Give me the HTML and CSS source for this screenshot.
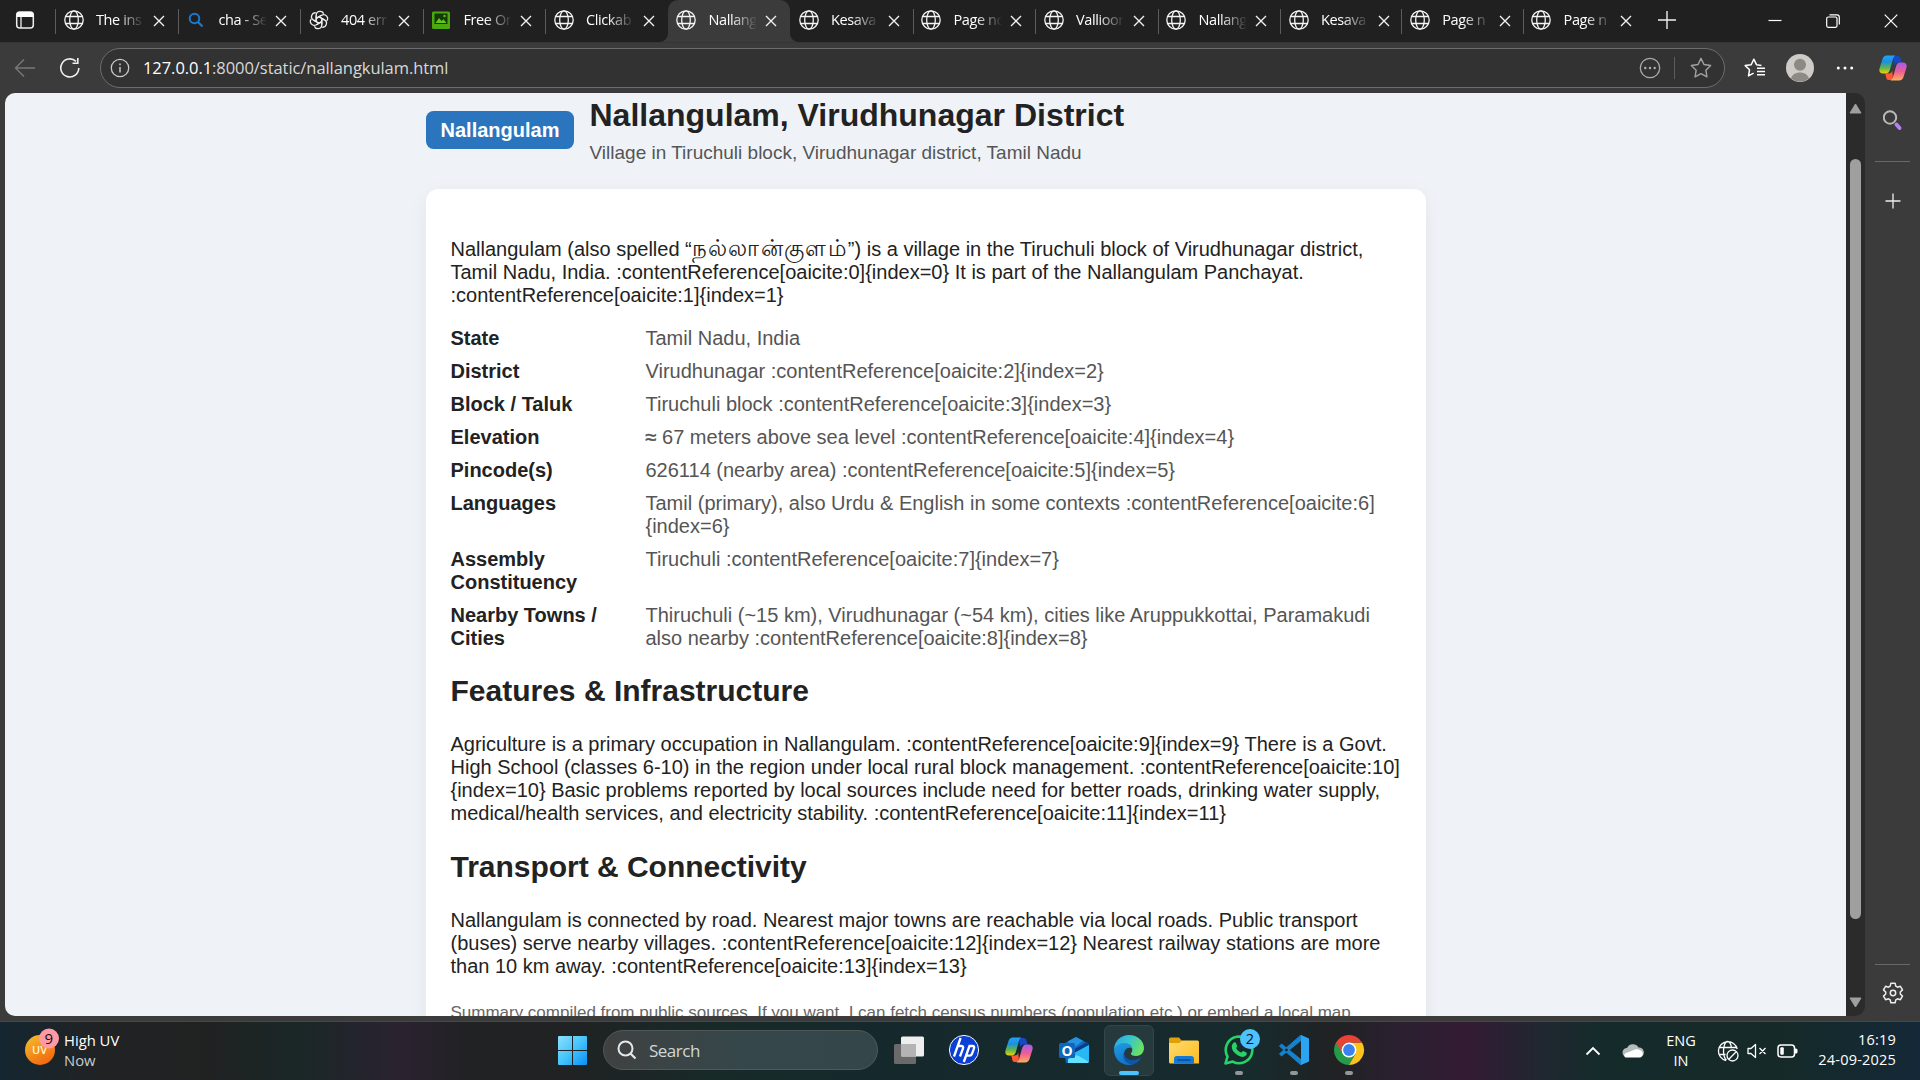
FILE: index.html
```html
<!DOCTYPE html>
<html lang="en">
<head>
<meta charset="utf-8">
<title>Nallangulam, Virudhunagar District</title>
<link rel="stylesheet" href="styles.css">
</head>
<body>
<svg class="defs" width="0" height="0" aria-hidden="true">
  <defs>
    <linearGradient id="cpA" x1="0" y1="0" x2="0" y2="1"><stop offset="0" stop-color="#1fa5f5"/><stop offset=".35" stop-color="#1c8fe0"/><stop offset=".7" stop-color="#62b846"/><stop offset="1" stop-color="#f5cf0a"/></linearGradient>
    <linearGradient id="cpB" x1="0" y1="0" x2="0" y2="1"><stop offset="0" stop-color="#a35cf0"/><stop offset=".5" stop-color="#ee5d95"/><stop offset="1" stop-color="#ffae5c"/></linearGradient>
    <linearGradient id="win" x1="0" y1="0" x2="1" y2="1"><stop offset="0" stop-color="#8be0ff"/><stop offset=".5" stop-color="#45c4fb"/><stop offset="1" stop-color="#0a8ff5"/></linearGradient>
    <linearGradient id="uv" x1="0" y1="0" x2=".6" y2="1"><stop offset="0" stop-color="#f2c12e"/><stop offset="1" stop-color="#f36a10"/></linearGradient>
    <linearGradient id="edA" x1="0" y1="0" x2="1" y2=".4"><stop offset="0" stop-color="#2ba3e4"/><stop offset=".5" stop-color="#35c4d0"/><stop offset="1" stop-color="#67e067"/></linearGradient>
    <linearGradient id="edB" x1="0" y1="0" x2=".3" y2="1"><stop offset="0" stop-color="#1f9de0"/><stop offset="1" stop-color="#1373cc"/></linearGradient>
    <linearGradient id="fold" x1="0" y1="0" x2="1" y2="1"><stop offset="0" stop-color="#ffdc6b"/><stop offset="1" stop-color="#fcba22"/></linearGradient>
    <symbol id="globe" viewBox="0 0 20 20"><g fill="none" stroke="#f4f4f4" stroke-width="1.3"><circle cx="10" cy="10" r="9.2"/><ellipse cx="10" cy="10" rx="4.3" ry="9.2"/><path d="M2 6.5h16M2 13.5h16"/></g></symbol>
    <symbol id="x" viewBox="0 0 12 12"><path d="M1 1l10 10M11 1L1 11" stroke="#f0f0f0" stroke-width="1.4" fill="none"/></symbol>
    <symbol id="star" viewBox="0 0 20 20"><path d="M10 1.2l2.7 5.6 6.1.9-4.4 4.3 1 6.1-5.4-2.9-5.4 2.9 1-6.1L1.200 7.700l6.100-.9z" fill="none" stroke-width="1.3" stroke-linejoin="round"/></symbol>
    <symbol id="copilot" viewBox="0 0 28 28"><path d="M14 2h4.500c1.700 0 2.600 1.200 3.100 3l1 3.500h-4c-2 0-3 1-3.600 3z" fill="#1748c8"/><path d="M14 26H9.500c-1.700 0-2-1.300-2.400-3L6.200 19.500h3.500c2 0 3-1 3.600-3z" fill="#ff5a34"/><path d="M8 1.500h8.500c-1.500.6-2.100 2-2.600 3.700L11 15.500c-.8 2.700-2 4-4.300 4H4c-3 0-4.200-2-3.500-5L3.500 5C4.200 2.700 5.600 1.500 8 1.500z" fill="url(#cpA)"/><path d="M20 26.500h-8.500c1.500-.6 2.100-2 2.600-3.700L17 12.500c.8-2.700 2-4 4.300-4H24c3 0 4.200 2 3.500 5L24.500 23c-.7 2.300-2.100 3.500-4.500 3.500z" fill="url(#cpB)"/></symbol>
  </defs>
</svg>

<header class="tabstrip">
  <div class="tabmenu"><svg width="20" height="20" viewBox="0 0 20 20"><rect x="1.700" y="2" width="16.600" height="16" rx="3" fill="none" stroke="#eee" stroke-width="1.500"/><path d="M1.700 7V4.500A2.500 2.500 0 0 1 4.200 2h11.600a2.500 2.500 0 0 1 2.500 2.500V7z" fill="#fff"/><path d="M6 7v11" stroke="#eee" stroke-width="1.300"/></svg></div>
  <div class="tabs">
    <div class="tab"><svg class="fav"><use href="#globe"/></svg><span>The ins</span><svg class="close"><use href="#x"/></svg></div>
    <div class="tab"><svg class="fav" viewBox="0 0 20 20"><circle cx="8.500" cy="8.500" r="4.800" fill="none" stroke="#1a7ad0" stroke-width="2"/><path d="M12 12l4.500 4.500" stroke="#1a7ad0" stroke-width="2.200"/></svg><span>cha - Se</span><svg class="close"><use href="#x"/></svg></div>
    <div class="tab"><svg class="fav" viewBox="0 0 20 20"><g fill="none" stroke="#eee" stroke-width="1.300" stroke-linejoin="round"><path id="petal" d="M7.200 11.700V5.300C7.200.6 13.400.2 14.600 3.700M7.200 8.400l5.300-3.100"/><use href="#petal" transform="rotate(60 10 10)"/><use href="#petal" transform="rotate(120 10 10)"/><use href="#petal" transform="rotate(180 10 10)"/><use href="#petal" transform="rotate(240 10 10)"/><use href="#petal" transform="rotate(300 10 10)"/></g></svg><span>404 err</span><svg class="close"><use href="#x"/></svg></div>
    <div class="tab"><svg class="fav" viewBox="0 0 20 20"><rect x="1" y="1.500" width="18" height="17.500" rx="1.500" fill="#4ba90d"/><path d="M3.500 3.500h13v10.500h-13z" fill="#173807"/><path d="M4.500 13l3.500-5 2.500 3 2-1.800 3 3.800z" fill="#62c41c"/><circle cx="13.500" cy="6" r="1.200" fill="#62c41c"/></svg><span>Free On</span><svg class="close"><use href="#x"/></svg></div>
    <div class="tab"><svg class="fav"><use href="#globe"/></svg><span>Clickab</span><svg class="close"><use href="#x"/></svg></div>
    <div class="tab active"><svg class="fav"><use href="#globe"/></svg><span>Nallang</span><svg class="close"><use href="#x"/></svg></div>
    <div class="tab first"><svg class="fav"><use href="#globe"/></svg><span>Kesava</span><svg class="close"><use href="#x"/></svg></div>
    <div class="tab"><svg class="fav"><use href="#globe"/></svg><span>Page no</span><svg class="close"><use href="#x"/></svg></div>
    <div class="tab"><svg class="fav"><use href="#globe"/></svg><span>Vallioor</span><svg class="close"><use href="#x"/></svg></div>
    <div class="tab"><svg class="fav"><use href="#globe"/></svg><span>Nallang</span><svg class="close"><use href="#x"/></svg></div>
    <div class="tab narrow"><svg class="fav"><use href="#globe"/></svg><span>Kesava</span><svg class="close"><use href="#x"/></svg></div>
    <div class="tab narrow"><svg class="fav"><use href="#globe"/></svg><span>Page n</span><svg class="close"><use href="#x"/></svg></div>
    <div class="tab narrow"><svg class="fav"><use href="#globe"/></svg><span>Page n</span><svg class="close"><use href="#x"/></svg></div>
  </div>
  <div class="newtab"><svg width="18" height="18" viewBox="0 0 18 18"><path d="M9 0v18M0 9h18" stroke="#eee" stroke-width="1.400"/></svg></div>
  <div class="wincontrols">
    <div><svg width="14" height="14" viewBox="0 0 14 14"><path d="M.5 6.500h13" stroke="#fff" stroke-width="1.200"/></svg></div>
    <div><svg width="14" height="14" viewBox="0 0 14 14"><rect x=".7" y="3" width="10.300" height="10.300" rx="1.500" fill="none" stroke="#fff" stroke-width="1.200"/><path d="M3.500.8h7.500a2.300 2.300 0 0 1 2.300 2.300v7.500" fill="none" stroke="#fff" stroke-width="1.200"/></svg></div>
    <div><svg width="14" height="14" viewBox="0 0 14 14"><path d="M.7.7l12.600 12.600M13.300.7L.7 13.300" stroke="#fff" stroke-width="1.200"/></svg></div>
  </div>
</header>

<div class="toolbar">
  <div class="tool nav"><svg width="22" height="20" viewBox="0 0 22 20"><path d="M10 1.500L1.500 10l8.500 8.500M1.500 10H21" fill="none" stroke="#787878" stroke-width="1.400"/></svg></div>
  <div class="tool nav"><svg width="22" height="22" viewBox="0 0 22 22"><path d="M19.800 11A9 9 0 1 1 17 4.400M18.800 1v5.300h-5.300" fill="none" stroke="#f0f0f0" stroke-width="1.600"/></svg></div>
  <div class="urlbar">
    <svg width="20" height="20" viewBox="0 0 20 20"><circle cx="10" cy="10" r="8.700" fill="none" stroke="#c8c8c8" stroke-width="1.300"/><path d="M10 9v5.500M10 5.500v1.700" stroke="#c8c8c8" stroke-width="1.500"/></svg>
    <span class="url"><b>127.0.0.1</b>:8000/static/nallangkulam.html</span>
    <svg width="22" height="22" viewBox="0 0 22 22"><circle cx="11" cy="11" r="9.700" fill="none" stroke="#aaa" stroke-width="1.300"/><g fill="#b0b0b0"><circle cx="6.300" cy="11" r="1.200"/><circle cx="11" cy="11" r="1.200"/><circle cx="15.700" cy="11" r="1.200"/></g></svg>
    <i class="sep"></i>
    <svg width="22" height="22" stroke="#a0a0a0"><use href="#star"/></svg>
  </div>
  <div class="tool fav-tool"><svg width="22" height="20" viewBox="0 0 22 20"><path d="M17.500 7.400l-5-.7L9.800 1.200 7.200 6.700l-6 .9 4.300 4.200-1 6.100 5.100-2.700" fill="none" stroke="#fff" stroke-width="1.500" stroke-linejoin="round"/><path d="M13 10.200h8M13 13.500h8M13 16.800h8" stroke="#fff" stroke-width="1.500"/></svg></div>
  <div class="tool avatar"><svg width="28" height="28" viewBox="0 0 28 28"><circle cx="14" cy="14" r="14" fill="#cfccc8"/><circle cx="14" cy="10.700" r="6" fill="#8d8985"/><path d="M5 24.500c1-4 5-6 9-6s8 2 9 6A14 14 0 0 1 14 27.500 14 14 0 0 1 5 24.500z" fill="#8d8985"/></svg></div>
  <div class="tool more"><svg width="18" height="6" viewBox="0 0 18 6"><g fill="#fff"><circle cx="2.300" cy="3" r="1.500"/><circle cx="9" cy="3" r="1.500"/><circle cx="15.700" cy="3" r="1.500"/></g></svg></div>
  <div class="tool cop"><svg width="28" height="28"><use href="#copilot"/></svg></div>
</div>

<div class="window">
  <main class="viewport">
    <div class="page">
      <div class="head">
        <div class="badge">Nallangulam</div>
        <div>
          <h1>Nallangulam, Virudhunagar District</h1>
          <div class="subtitle">Village in Tiruchuli block, Virudhunagar district, Tamil Nadu</div>
        </div>
      </div>
      <article class="card">
        <p class="intro">Nallangulam (also spelled “<span class="tamil" lang="ta">நல்லான்குளம்</span>”) is a village in the Tiruchuli block of Virudhunagar district, Tamil Nadu, India. :contentReference[oaicite:0]{index=0} It is part of the Nallangulam Panchayat. :contentReference[oaicite:1]{index=1}</p>
        <dl>
          <dt>State</dt><dd>Tamil Nadu, India</dd>
          <dt>District</dt><dd>Virudhunagar :contentReference[oaicite:2]{index=2}</dd>
          <dt>Block / Taluk</dt><dd>Tiruchuli block :contentReference[oaicite:3]{index=3}</dd>
          <dt>Elevation</dt><dd><span class="approx">≈</span> 67 meters above sea level :contentReference[oaicite:4]{index=4}</dd>
          <dt>Pincode(s)</dt><dd>626114 (nearby area) :contentReference[oaicite:5]{index=5}</dd>
          <dt>Languages</dt><dd>Tamil (primary), also Urdu &amp; English in some contexts :contentReference[oaicite:6]{index=6}</dd>
          <dt>Assembly Constituency</dt><dd>Tiruchuli :contentReference[oaicite:7]{index=7}</dd>
          <dt>Nearby Towns / Cities</dt><dd>Thiruchuli (~15 km), Virudhunagar (~54 km), cities like Aruppukkottai, Paramakudi also nearby :contentReference[oaicite:8]{index=8}</dd>
        </dl>
        <h2>Features &amp; Infrastructure</h2>
        <p>Agriculture is a primary occupation in Nallangulam. :contentReference[oaicite:9]{index=9} There is a Govt. High School (classes 6-10) in the region under local rural block management. :contentReference[oaicite:10]{index=10} Basic problems reported by local sources include need for better roads, drinking water supply, medical/health services, and electricity stability. :contentReference[oaicite:11]{index=11}</p>
        <h2 class="second">Transport &amp; Connectivity</h2>
        <p>Nallangulam is connected by road. Nearest major towns are reachable via local roads. Public transport (buses) serve nearby villages. :contentReference[oaicite:12]{index=12} Nearest railway stations are more than 10 km away. :contentReference[oaicite:13]{index=13}</p>
        <p class="note">Summary compiled from public sources. If you want, I can fetch census numbers (population etc.) or embed a local map.</p>
      </article>
    </div>
  </main>
  <div class="scrollbar">
    <svg width="13" height="11" viewBox="0 0 13 11"><path d="M6.500 1L12 10H1z" fill="#9f9f9f" stroke="#9f9f9f" stroke-linejoin="round"/></svg>
    <div class="thumb"></div>
    <svg width="13" height="11" viewBox="0 0 13 11"><path d="M6.500 10L12 1H1z" fill="#9f9f9f" stroke="#9f9f9f" stroke-linejoin="round"/></svg>
  </div>
  <aside class="sidebar">
    <svg width="20" height="20" viewBox="0 0 20 20"><circle cx="7" cy="7.500" r="6.200" fill="none" stroke="#b9b9b9" stroke-width="2"/><path d="M13.500 14.500l3 3.500" stroke="#b583ee" stroke-width="3.800" stroke-linecap="round"/></svg>
    <hr>
    <svg width="16" height="16" viewBox="0 0 16 16"><path d="M8 .5v15M.5 8h15" stroke="#eee" stroke-width="1.300"/></svg>
    <div class="grow"></div>
    <hr>
    <svg class="gear" width="22" height="22" viewBox="0 0 22 22"><path d="M8.900 1.200h4.200l.7 3 1.700 1 2.900-.9 2.100 3.600-2.200 2.100v2l2.200 2.100-2.100 3.600-2.900-.9-1.700 1-.7 3H8.900l-.7-3-1.700-1-2.900.9-2.100-3.600L3.700 12v-2L1.500 7.900l2.100-3.600 2.900.9 1.700-1z" fill="none" stroke="#eee" stroke-width="1.500" stroke-linejoin="round"/><circle cx="11" cy="11" r="2.700" fill="none" stroke="#eee" stroke-width="1.500"/></svg>
  </aside>
</div>

<footer class="taskbar">
  <div class="widget">
    <svg width="42" height="38" viewBox="0 0 42 38"><circle cx="15" cy="22" r="15" fill="url(#uv)"/><text x="14.500" y="26" text-anchor="middle" class="uvt">UV</text><circle cx="24" cy="10.500" r="10" fill="#ff99a4"/><text x="23.700" y="16" text-anchor="middle" class="count">9</text></svg>
    <div class="wtext"><span>High UV</span><span class="dim">Now</span></div>
  </div>
  <div class="start"><svg width="29" height="29" viewBox="0 0 29 29"><path d="M0 1a1 1 0 0 1 1-1h13v14H0zM15 0h13a1 1 0 0 1 1 1v13H15zM0 15h14v14H1a1 1 0 0 1-1-1zM15 15h14v13a1 1 0 0 1-1 1H15z" fill="url(#win)"/></svg></div>
  <div class="search"><svg width="20" height="20" viewBox="0 0 20 20"><circle cx="8.500" cy="8.500" r="7" fill="none" stroke="#e4e8e8" stroke-width="2"/><path d="M13.500 13.500l5 5" stroke="#e4e8e8" stroke-width="2.200"/></svg><span>Search</span></div>
  <div class="apps">
    <div class="app"><svg width="32" height="32" viewBox="0 0 32 32"><rect x="1" y="10" width="22" height="20" rx="1.500" fill="#6a6a6a"/><rect x="8" y="2.500" width="23" height="20" rx="1.500" fill="#eee"/><path d="M8 10h15v12.500H9.500A1.500 1.500 0 0 1 8 21z" fill="#b4b4b4"/></svg></div>
    <div class="app"><svg width="32" height="32" viewBox="0 0 32 32"><circle cx="16" cy="16" r="14.600" fill="#0a3fd6" stroke="#f4f6ff" stroke-width="1"/><g fill="none" stroke="#fff" stroke-width="2.300"><path d="M12.600 4L6 22.500M10 12h3.200c1.800 0 2.300 1 1.800 2.400L12 22.500M15.800 28L21.500 12h3c1.600 0 2 1 1.500 2.300l-2 5.500c-.5 1.400-1.300 1.800-2.600 1.800h-3"/></g></svg></div>
    <div class="app"><svg width="28" height="28"><use href="#copilot"/></svg></div>
    <div class="app"><svg width="32" height="32" viewBox="0 0 32 32"><path d="M5 10L18 3l13 7v17a2 2 0 0 1-2 2H8z" fill="#1267c2"/><path d="M10 7.300L18 3l7 3.700L13 16z" fill="#2592e2"/><path d="M15 16L30 7.500l1 3.500-14 8z" fill="#0a3d86"/><path d="M16 19l15-8v16a2 2 0 0 1-2 2H12z" fill="#27b7f4"/><path d="M10 25l9-4 12 7-2 1H10z" fill="#63e2ff"/><rect x="1" y="9" width="16" height="15" rx="1.500" fill="#0d67bd"/><text x="9" y="21.500" text-anchor="middle" class="ol">O</text></svg></div>
    <div class="app on"><svg width="32" height="32" viewBox="0 0 32 32"><path d="M1 16C1 7.500 7.500 1 16 1s15 6 15 13c0 5-3.600 8-8 8-3.300 0-5.200-1.200-5.200-2.300 0-.8 1.500-1.500 1.500-4C19.300 12.500 16 10 12 10 6.500 10 2 12.500 1 16z" fill="url(#edA)"/><path d="M1 15.500C2 12 6 9 11.500 9c4.500 0 7.800 2.800 7.800 6-1-1.600-6.300-2.500-8 3-1.600 6 2.700 11 8.700 12.300-1.200.5-2.500.7-4 .7-8.500 0-15-6.500-15-15.500z" fill="url(#edB)"/><path d="M11.200 18c-.5 5 4 9 9.800 8 3.400-.5 5.500-1.500 7.400-2.800C26.500 27.500 22.500 30 19 30.500 12.500 30 8.500 23.500 11.200 18z" fill="#0c57ad"/></svg><i></i></div>
    <div class="app"><svg width="32" height="32" viewBox="0 0 32 32"><path d="M1 5a1.500 1.500 0 0 1 1.500-1.500H11L14 7h13v6H1z" fill="#e0a008"/><path d="M1 9h10.500L14 6.500h15.500A1.500 1.500 0 0 1 31 8v21.500H2.500A1.500 1.500 0 0 1 1 28z" fill="url(#fold)"/><path d="M6 29.500V25a3 3 0 0 1 3-3h14a3 3 0 0 1 3 3v4.500z" fill="#1478d4"/><path d="M9.500 26h13" stroke="#0a4a92" stroke-width="1.500"/></svg></div>
    <div class="app"><svg width="32" height="32" viewBox="0 0 32 32"><path d="M2.500 29.500l2-7A13.300 13.300 0 1 1 9.700 27.600z" fill="none" stroke="#25d366" stroke-width="2.600" stroke-linejoin="round"/><path d="M11 8.500c1-.5 1.700-.3 2 .5l1.200 2.900c.2.700-1.200 1.600-1 2.200.9 1.900 2.700 3.700 4.900 4.500.7.200 1.500-1.800 2.200-1.500l3 1.500c1 .5.300 2.400-.5 3.200-3 2.700-8.500.2-11.700-3.500C8.300 15 7.800 10.500 11 8.500z" fill="#25d366"/></svg><b class="bubble">2</b><i></i></div>
    <div class="app"><svg width="32" height="32" viewBox="0 0 32 32"><path d="M3.500 10L23 25.500 23 31 1.500 12.200zM3.500 22L23 6.500V1L1.500 19.800z" fill="#1482cd" stroke="#1482cd" stroke-width="1" stroke-linejoin="round"/><path d="M23 1l8 3.500v23L23 31z" fill="#2ba4f2"/></svg><i></i></div>
    <div class="app"><svg width="32" height="32" viewBox="0 0 32 32"><path d="M3.010 8.500A15 15 0 0 0 16 31l6.500-11.200L16 16z" fill="#259b4a"/><path d="M16 8.500h13A15 15 0 0 1 16 31l6.500-11.200z" fill="#fcc31e"/><path d="M3.010 8.500A15 15 0 0 1 28.990 8.500H16a7.500 7.500 0 0 0-6.500 11.300z" fill="#ea4335"/><circle cx="16" cy="16" r="7.400" fill="#fff"/><circle cx="16" cy="16" r="5.900" fill="#3b82f0"/></svg><i></i></div>
  </div>
  <div class="tray">
    <svg width="16" height="10" viewBox="0 0 16 10"><path d="M1.500 8.500L8 2l6.500 6.500" fill="none" stroke="#fff" stroke-width="1.800"/></svg>
    <svg class="cloud" width="22" height="16" viewBox="0 0 22 16"><path d="M5 14a4.500 4.500 0 0 1 0-9 6.500 6.500 0 0 1 11.500-.5A5 5 0 0 1 19 14z" fill="#b5bcbc"/><path d="M3.500 14.500A2.500 2.500 0 0 1 3 10.500L13 6.500c2-.8 4 0 5.500.7a4 4 0 0 1 0 7.300z" fill="#fff"/></svg>
    <div class="lang"><span>ENG</span><span>IN</span></div>
    <svg class="net" width="22" height="22" viewBox="0 0 22 22"><g fill="none" stroke="#fff" stroke-width="1.300"><path d="M9 20.500A9.500 9.500 0 1 1 20.200 9M9.500 20C7 18 6.500 14 6.500 11S7.500 1.500 10.500 1.500c2.200 0 3.600 3.500 3.900 6.500M2 7.500h17M2 14.500h6.500"/><circle cx="15.500" cy="15.500" r="5.500"/><path d="M11.800 19.200l7.400-7.400"/></g></svg>
    <svg class="snd" width="20" height="16" viewBox="0 0 20 16"><path d="M1 5.500h3L8.500 1.500v13L4 10.500H1zM12.500 5l6 6M18.500 5l-6 6" fill="none" stroke="#fff" stroke-width="1.300" stroke-linejoin="round"/></svg>
    <svg class="bat" width="22" height="14" viewBox="0 0 22 14"><rect x="1" y="1" width="16.500" height="12" rx="3" fill="none" stroke="#fff" stroke-width="1.500"/><rect x="3.300" y="3.300" width="3.500" height="7.400" rx="1" fill="#fff"/><path d="M18 4.500h1a1.500 1.500 0 0 1 1.500 1.500v2A1.500 1.500 0 0 1 19 9.500h-1z" fill="#fff"/></svg>
    <div class="clock"><span>16:19</span><span>24-09-2025</span></div>
  </div>
</footer>
</body>
</html>
```
FILE: styles.css
```css
* { box-sizing: border-box; }
html, body { height: 100%; }
body {
  margin: 0;
  display: flex;
  flex-direction: column;
  overflow: hidden;
  background: #3b3b3b;
  color: #fff;
  font-family: "Open Sans", "Noto Sans", sans-serif;
}
svg { display: block; flex: none; }
.defs { position: absolute; }

/* Tab strip */
.tabstrip { flex: none; height: 42px; display: flex; background: #202020; }
.tabmenu { width: 55px; padding: 10px 0 0 15px; }
.tabs { display: flex; width: 1590px; }
.tab {
  flex: none;
  width: 122.500px;
  height: 42px;
  display: flex;
  align-items: center;
  padding: 0 0 2px 8.500px;
  background: linear-gradient(#5c5c5c, #5c5c5c) 0 9px / 1px 25px no-repeat;
}
.tab.narrow { width: 121.300px; }
.fav { width: 20px; height: 20px; }
.tab span {
  width: 47px;
  margin-left: 12.500px;
  overflow: hidden;
  white-space: nowrap;
  font-size: 14.500px;
  letter-spacing: -.4px;
  line-height: 22px;
  -webkit-mask-image: linear-gradient(90deg, #000 45%, transparent 103%);
  mask-image: linear-gradient(90deg, #000 45%, transparent 103%);
}
.close { width: 12px; height: 12px; margin: 1px 0 0 9.500px; }
/* The active tab flares out into the toolbar at both feet */
.tab.active { position: relative; background: #3b3b3b; border-radius: 10px 10px 0 0; }
.tab.active::before,
.tab.active::after { content: ""; position: absolute; bottom: 0; width: 8px; height: 8px; }
.tab.active::before { left: -8px; background: radial-gradient(circle at 0 0, transparent 7.500px, #3b3b3b 8px); }
.tab.active::after { right: -8px; background: radial-gradient(circle at 100% 0, transparent 7.500px, #3b3b3b 8px); }
.tab.first { background: none; }
.newtab { width: 44px; padding: 11px 0 0 13px; }
.wincontrols { margin-left: auto; display: flex; }
.wincontrols div { width: 58px; padding: 14px 0 0 22px; }

/* Address row */
.toolbar { flex: none; height: 51px; display: flex; align-items: center; background: #3b3b3b; border-top: 1px solid #353535; padding-left: 2px; }
.nav { width: 45px; }
.tool { display: flex; justify-content: center; }
.urlbar {
  width: 1625px;
  height: 40px;
  margin-left: 8px;
  padding: 0 12px 0 9px;
  display: flex;
  align-items: center;
  border: 1px solid #6d6d6d;
  border-radius: 20px;
  background: #323232;
}
.url { flex: 1; margin: -2px 0 0 13px; font-size: 16.500px; letter-spacing: -.06px; color: #d8d8d8; }
.url b { font-weight: 400; color: #fff; }
.sep { width: 1px; height: 22px; margin: 0 15px 0 13px; background: #5c5c5c; }
.fav-tool { width: 60px; }
.avatar { width: 30px; }
.more { width: 60px; }
.cop { width: 36px; }

/* Page area */
.window { flex: 1; min-height: 0; display: flex; padding: 0 0 5px 5px; }
.viewport { width: 1841px; height: 923px; overflow: hidden; background: #eff3f8; border-radius: 10px 0 0 10px; }
.page { width: 1000px; margin: 0 0 0 420.500px; font-family: "Liberation Sans", Arial, sans-serif; font-size: 20px; line-height: 23px; color: #222; }
.head { display: flex; align-items: center; gap: 16px; height: 71px; padding-top: 3px; }
.badge { width: 148px; padding: 7.500px 0 7.500px 1px; border-radius: 7.500px; background: #2a75bd; color: #fff; font-weight: 700; text-align: center; }
h1 { margin: 0 0 8px; font-size: 32px; line-height: 37px; }
.subtitle { font-size: 19px; line-height: 22px; color: #555; }
.card { margin-top: 25px; height: 1000px; padding: 49px 25px; border-radius: 12.500px; background: #fff; box-shadow: 0 5px 20px rgba(0, 0, 0, .06); }
p { margin: 0; }
.tamil { font-size: 23px; letter-spacing: 1.300px; line-height: 0; }
.approx { -webkit-text-stroke: .5px #555; }
dl { display: grid; grid-template-columns: 182.500px 1fr; gap: 10px 12.500px; margin: 20px 0 0; }
dt { font-weight: 700; }
dd { margin: 0; color: #555; }
h2 { margin: 24px 0 25px; font-size: 30px; line-height: 34px; }
h2.second { margin-top: 25px; letter-spacing: -.02px; }
.note { margin-top: 24px; font-size: 17px; letter-spacing: -.01px; line-height: 21px; color: #666; white-space: nowrap; }

.scrollbar { width: 19px; height: 923px; display: flex; flex-direction: column; align-items: center; padding: 10px 0 8px; background: #2b2b2b; border-radius: 0 10px 10px 0; }
.thumb { width: 11px; height: 760px; margin: 45px 0 auto; border-radius: 6px; background: #9f9f9f; }
.sidebar { width: 55px; display: flex; flex-direction: column; align-items: center; padding-top: 17px; }
.sidebar hr { width: 35px; height: 1px; margin: 31px 0 31px; border: 0; background: #686868; }
.sidebar .grow { flex: 1; }
.sidebar hr:nth-of-type(2) { margin: 0 0 17px; }
.gear { margin-bottom: 12px; }

/* Taskbar */
.taskbar {
  flex: none;
  height: 59px;
  display: flex;
  align-items: flex-start;
  border-top: 1px solid #434849;
  background: linear-gradient(90deg, #142630 0, #202325 90px, #202222 210px, #1a2727 300px, #2b2230 400px, #202223 475px, #202223 570px, #172a28 720px, #15292d 860px, #172b2d 1250px, #202223 1330px, #2b2030 1400px, #331b34 1470px, #202730 1540px, #152b2b 1600px, #152a28 1780px, #142838 1920px);
}
.widget { width: 558px; display: flex; padding: 6px 0 0 25px; }
.uvt { font: 600 11px "Open Sans", sans-serif; fill: #fff3d0; }
.count { font: 15px "Open Sans", sans-serif; fill: #111; }
.wtext { display: flex; flex-direction: column; margin: 2px 0 0 -3px; font-size: 14.800px; line-height: 20px; }
.dim { color: #c8cccd; }
.start { width: 45px; padding-top: 14px; }
.search {
  width: 275px;
  height: 40px;
  margin-top: 8px;
  display: flex;
  align-items: center;
  gap: 12px;
  padding-left: 13px;
  border: 1px solid #505858;
  border-radius: 20px;
  background: linear-gradient(90deg, #404141, #35474a 50%, #34464a);
  color: #d2d7d8;
  font-size: 17px;
  letter-spacing: -.5px;
}
.apps { display: flex; gap: 5px; margin: 3px 0 0 6px; }
.app { position: relative; width: 50px; height: 51px; display: flex; align-items: center; justify-content: center; padding-bottom: 2px; border-radius: 6px; }
.app.on { background: #263a3d; border: 1px solid #33464a; }
.app i { position: absolute; bottom: 1px; left: 21px; width: 8px; height: 4px; border-radius: 2px; background: #929899; }
.app.on i { left: 14px; bottom: 0; width: 20px; background: #4cc2ff; }
.bubble { position: absolute; left: 26px; top: 4px; width: 20px; height: 20px; border-radius: 10px; background: #4cc2ff; color: #111; font-size: 14.500px; font-weight: 400; line-height: 20px; text-align: center; }
.ol { font: 700 14px "Open Sans", sans-serif; fill: #fff; }
.tray { margin-left: auto; height: 57px; display: flex; align-items: center; padding-right: 24px; font-size: 14.500px; line-height: 20px; }
.cloud { margin-left: 21px; }
.lang { width: 40px; margin-left: 17px; display: flex; flex-direction: column; text-align: center; }
.net { margin-left: 16px; }
.snd { margin-left: 8px; }
.bat { margin-left: 10px; }
.clock { width: 97px; margin-top: -2px; display: flex; flex-direction: column; text-align: right; letter-spacing: .2px; }
```
